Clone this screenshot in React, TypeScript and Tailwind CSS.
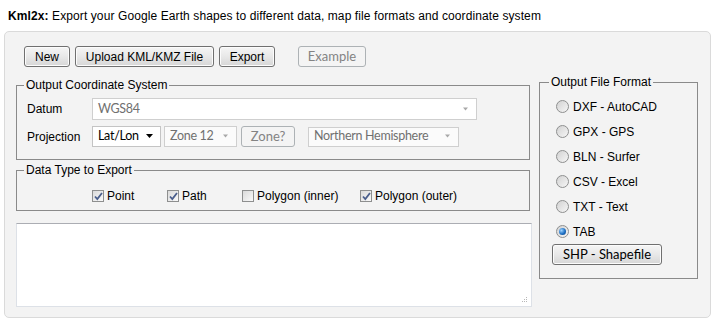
import React from 'react';

const ui = "font-['Lato','Open_Sans',sans-serif]";

const Btn = ({ children, className = '', disabled = false }: { children: React.ReactNode; className?: string; disabled?: boolean }) => (
  <button
    className={
      'h-[21px] rounded-[3px] border flex items-center justify-center leading-none ' +
      (disabled
        ? 'border-[#adb2b5] bg-[#f4f4f4] text-[#838383] ' + ui + ' text-[13px] '
        : 'border-[#707070] bg-gradient-to-b from-[#f6f6f6] via-[#e8e8e8] to-[#d6d6d6] shadow-[inset_0_0_0_1px_#fcfcfc] text-black text-[12px] ') +
      className
    }
  >
    {children}
  </button>
);

const Arrow = ({ dark = false }: { dark?: boolean }) => (
  <svg width="8" height="5" viewBox="0 0 8 5" className="shrink-0">
    <path d={dark ? 'M0 0h7L3.5 4z' : 'M1 0.5h5L3.5 3.5z'} fill={dark ? '#000' : '#a8a8a8'} />
  </svg>
);

const Select = ({ value, className = '', enabled = false }: { value: string; className?: string; enabled?: boolean }) => (
  <div
    className={
      'flex items-center justify-between pl-[5px] pr-[6px] border text-[12.5px] tracking-[-0.3px] ' +
      ui +
      (enabled ? ' bg-white border-[#c4c4c4] text-black' : ' bg-[#fbfbfb] border-[#cfcfcf] text-[#707070]') +
      ' ' +
      className
    }
  >
    <span className="leading-none">{value}</span>
    <Arrow dark={enabled} />
  </div>
);

const Check = ({ checked, label, className = '' }: { checked: boolean; label: string; className?: string }) => (
  <div className={'flex items-center ' + className}>
    <div className="w-[12px] h-[12px] border border-[#8e8f8f] bg-gradient-to-br from-[#dadada] to-[#fafafa] flex items-center justify-center">
      {checked && (
        <svg width="9" height="9" viewBox="0 0 9 9">
          <path d="M1 4.5l2.3 2.5L8 1" stroke="#4a5e8c" strokeWidth="1.8" fill="none" />
        </svg>
      )}
    </div>
    <span className="ml-[3px]">{label}</span>
  </div>
);

const Radio = ({ checked, label }: { checked: boolean; label: string }) => (
  <div className="h-[25px] flex items-center">
    <div className="w-[13px] h-[13px] rounded-full border border-[#8e8f8f] bg-gradient-to-br from-[#d2d2d2] to-[#f6f6f6] flex items-center justify-center">
      {checked && <div className="w-[7px] h-[7px] rounded-full bg-[radial-gradient(circle_at_35%_35%,#9fd4ff,#1d6fc4_55%,#0b3f7d)]" />}
    </div>
    <span className="ml-[4px]">{label}</span>
  </div>
);

export default function App() {
  return (
    <div className="w-[715px] h-[322px] bg-white px-[4px] pt-[9px] text-black font-['Liberation_Sans',Arial,sans-serif] text-[12px]">
      <p className="h-[22px] pl-[4px] text-[12px] tracking-[0.1px] leading-[15px]">
        <b>Kml2x:</b> Export your Google Earth shapes to different data, map file formats and coordinate system
      </p>
      <div className="w-[707px] h-[287px] border border-[#dadada] rounded-[5px] bg-[#f3f3f3] flex pl-[11px] pt-[14px]">
        <div className="w-[516px] flex flex-col">
          <div className="flex pl-[8px]">
            <Btn className="w-[46px]">New</Btn>
            <Btn className="w-[139px] ml-[5px]">Upload KML/KMZ File</Btn>
            <Btn className="w-[56px] ml-[5px]">Export</Btn>
            <Btn className="w-[68px] ml-[23px]" disabled>Example</Btn>
          </div>

          <fieldset className="mt-[11px] w-[514px] h-[82px] border border-[#8a8a8a]">
            <legend className="ml-[7px] px-[2px] leading-[15px]">Output Coordinate System</legend>
            <div className="pl-[10px] pt-[5px] flex flex-col gap-[6px]">
              <div className="flex items-center">
                <span className="w-[65px]">Datum</span>
                <Select value="WGS84" className="w-[385px] h-[22px] !bg-white" />
              </div>
              <div className="flex items-center">
                <span className="w-[65px]">Projection</span>
                <Select value="Lat/Lon" enabled className="w-[69px] h-[21px]" />
                <Select value="Zone 12" className="w-[73px] h-[21px] ml-[3px]" />
                <Btn disabled className="w-[54px] ml-[4px]">Zone?</Btn>
                <Select value="Northern Hemisphere" className="w-[151px] h-[20px] ml-[13px]" />
              </div>
            </div>
          </fieldset>

          <fieldset className="mt-[3px] w-[514px] h-[48px] border border-[#8a8a8a]">
            <legend className="ml-[7px] px-[2px] leading-[15px]">Data Type to Export</legend>
            <div className="flex pl-[75px] pt-[9px]">
              <Check checked label="Point" className="w-[75px]" />
              <Check checked label="Path" className="w-[75px]" />
              <Check checked={false} label="Polygon (inner)" className="w-[118px]" />
              <Check checked label="Polygon (outer)" />
            </div>
          </fieldset>

          <div className="relative mt-[12px] w-[516px] h-[84px] bg-white border border-[#dde1e7] border-t-[#abadb3]">
            <svg width="6" height="6" viewBox="0 0 6 6" className="absolute right-[3px] bottom-[3px]">
              <rect x="4" y="0" width="1" height="1" fill="#b8b8b8" />
              <rect x="2" y="2" width="1" height="1" fill="#b8b8b8" />
              <rect x="4" y="2" width="1" height="1" fill="#b8b8b8" />
              <rect x="0" y="4" width="1" height="1" fill="#b8b8b8" />
              <rect x="2" y="4" width="1" height="1" fill="#b8b8b8" />
              <rect x="4" y="4" width="1" height="1" fill="#b8b8b8" />
            </svg>
          </div>
        </div>

        <fieldset className="ml-[7px] mt-[29px] w-[159px] h-[204px] border border-[#8a8a8a]">
          <legend className="ml-[9px] px-[2px] leading-[15px]">Output File Format</legend>
          <div className="pl-[12px] pt-[4px] flex flex-col">
            <div className="pl-[4px]">
              <Radio checked={false} label="DXF - AutoCAD" />
              <Radio checked={false} label="GPX - GPS" />
              <Radio checked={false} label="BLN - Surfer" />
              <Radio checked={false} label="CSV - Excel" />
              <Radio checked={false} label="TXT - Text" />
              <Radio checked label="TAB" />
            </div>
            <button className={'w-[110px] h-[21px] rounded-[3px] border border-[#707070] bg-gradient-to-b from-[#f6f6f6] via-[#e8e8e8] to-[#d6d6d6] shadow-[inset_0_0_0_1px_#fcfcfc] text-[13px] leading-none ' + ui}>
              SHP - Shapefile
            </button>
          </div>
        </fieldset>
      </div>
    </div>
  );
}
